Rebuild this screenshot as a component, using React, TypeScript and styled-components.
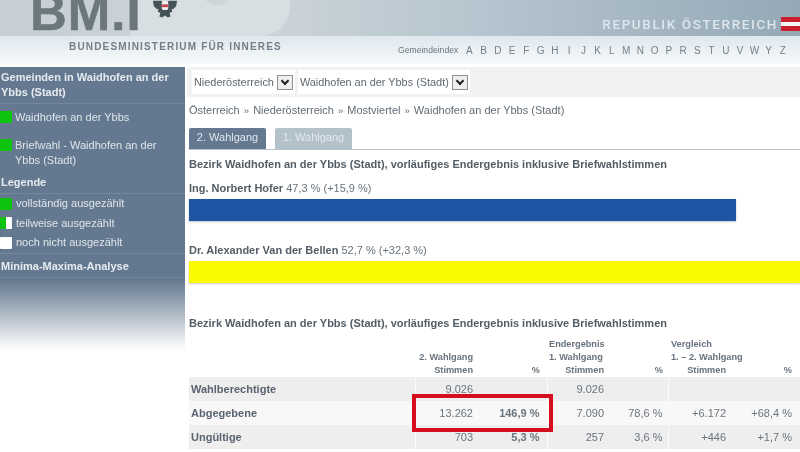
import styled, { createGlobalStyle } from "styled-components";

const GlobalStyle = createGlobalStyle`
  html, body {
    margin: 0;
    padding: 0;
    background: #fff;
    overflow: hidden;
  }
  body {
    font-family: "Liberation Sans", Arial, sans-serif;
  }
`;

const letters = "A B D E F G H I J K L M N O P R S T U V W Y Z".split(" ");

const sideGroups = [
  { color: "green", text: "Waidhofen an der Ybbs" },
  { color: "green", text: "Briefwahl - Waidhofen an der Ybbs (Stadt)" },
];

const legend = [
  { color: "green", text: "vollständig ausgezählt" },
  { color: "half", text: "teilweise ausgezählt" },
  { color: "white", text: "noch nicht ausgezählt" },
];

const rows = [
  { label: "Wahlberechtigte", cells: ["9.026", "", "9.026", "", "", ""] },
  { label: "Abgegebene", cells: ["13.262", "146,9 %", "7.090", "78,6 %", "+6.172", "+68,4 %"] },
  { label: "Ungültige", cells: ["703", "5,3 %", "257", "3,6 %", "+446", "+1,7 %"] },
];

const Eagle = () => (
  <svg width="26" height="19" viewBox="0 0 28 19">
    <path d="M1 0h9l2 3h4l2-3h9l-1 6-3 3-2 0 1 3-3 1 1 4-3 1-3-2-3 2-3-1 1-4-3-1 1-3-2 0-3-3z" fill="#465356" />
    <rect x="10.5" y="1" width="7" height="9" rx="2" fill="#f4f4f4" />
    <rect x="10.5" y="4" width="7" height="3" fill="#c8454f" />
  </svg>
);

const App = () => {
  return (
    <Page>
      <GlobalStyle />
      <TopBand>
        <Swirl />
        <Logo>
          BM.I
          <Eagle />
        </Logo>
        <Republic>
          REPUBLIK ÖSTERREICH
          <Flag />
        </Republic>
      </TopBand>
      <SubBand>
        <Ministry>BUNDESMINISTERIUM FÜR INNERES</Ministry>
        <IndexBar>
          <IndexLabel>Gemeindeindex</IndexLabel>
          {letters.map((l) => (
            <IndexLetter key={l}>{l}</IndexLetter>
          ))}
        </IndexBar>
      </SubBand>
      <Body>
        <Sidebar>
          <SideSolid>
            <SideTitle>Gemeinden in Waidhofen an der Ybbs (Stadt)</SideTitle>
            {sideGroups.map((g) => (
              <SideItem key={g.text}>
                <Swatch $kind={g.color} />
                <span>{g.text}</span>
              </SideItem>
            ))}
            <SideTitle>Legende</SideTitle>
            {legend.map((g) => (
              <LegendItem key={g.text}>
                <Swatch $kind={g.color} />
                <span>{g.text}</span>
              </LegendItem>
            ))}
            <SideTitle>Minima-Maxima-Analyse</SideTitle>
          </SideSolid>
          <SideFade />
        </Sidebar>
        <Main>
          <SelectBar>
            <FakeSelect>
              Niederösterreich
              <SelectArrow />
            </FakeSelect>
            <FakeSelect>
              Waidhofen an der Ybbs (Stadt)
              <SelectArrow />
            </FakeSelect>
          </SelectBar>
          <Crumbs>
            Österreich <Sep>»</Sep> Niederösterreich <Sep>»</Sep> Mostviertel <Sep>»</Sep> Waidhofen an der Ybbs (Stadt)
          </Crumbs>
          <Tabs>
            <Tab $active>2. Wahlgang</Tab>
            <Tab>1. Wahlgang</Tab>
          </Tabs>
          <Heading>Bezirk Waidhofen an der Ybbs (Stadt), vorläufiges Endergebnis inklusive Briefwahlstimmen</Heading>
          <Candidate>
            <b>Ing. Norbert Hofer</b> 47,3 % (+15,9 %)
          </Candidate>
          <Bar $color="#1f55a3" $width={547} />
          <Candidate $second>
            <b>Dr. Alexander Van der Bellen</b> 52,7 % (+32,3 %)
          </Candidate>
          <Bar $color="#fbfb00" $width={611} />
          <TableHeading>
            Bezirk Waidhofen an der Ybbs (Stadt), vorläufiges Endergebnis inklusive Briefwahlstimmen
          </TableHeading>
          <TableWrap>
            <ResultTable>
              <colgroup>
                <col style={{ width: 226 }} />
                <col style={{ width: 58 }} />
                <col style={{ width: 74 }} />
                <col style={{ width: 57 }} />
                <col style={{ width: 64 }} />
                <col style={{ width: 58 }} />
                <col style={{ width: 74 }} />
              </colgroup>
              <thead>
                <tr>
                  <Head />
                  <Head>
                    <HeadLine>2. Wahlgang</HeadLine>
                    Stimmen
                  </Head>
                  <Head>%</Head>
                  <Head>
                    <HeadLine $left>Endergebnis</HeadLine>
                    <HeadLine $left>1. Wahlgang</HeadLine>
                    Stimmen
                  </Head>
                  <Head>%</Head>
                  <Head>
                    <HeadLine $left>Vergleich</HeadLine>
                    <HeadLine $left>1. – 2. Wahlgang</HeadLine>
                    Stimmen
                  </Head>
                  <Head>%</Head>
                </tr>
              </thead>
              <tbody>
                {rows.map((r, i) => (
                  <BodyRow key={r.label} $odd={i % 2 === 0}>
                    <RowLabel>{r.label}</RowLabel>
                    {r.cells.map((c, j) => (
                      <Cell key={j} $strong={j === 1}>
                        {c}
                      </Cell>
                    ))}
                  </BodyRow>
                ))}
              </tbody>
            </ResultTable>
            <Highlight />
          </TableWrap>
        </Main>
      </Body>
    </Page>
  );
};

export default App;

const Page = styled.div`
  width: 800px;
  height: 452px;
  overflow: hidden;
  background: #fff;
  color: #5c6670;
  filter: blur(0.5px);
`;

const TopBand = styled.div`
  position: relative;
  height: 36px;
  overflow: hidden;
  display: flex;
  align-items: flex-end;
  justify-content: space-between;
  background: linear-gradient(90deg, #c6d0d5 0%, #cad3d8 35%, #b4c4ce 62%, #94a8b6 100%);
`;

const Logo = styled.div`
  display: flex;
  align-items: flex-start;
  gap: 10px;
  height: 32px;
  margin-left: 30px;
  margin-bottom: 7px;
  font-size: 51px;
  line-height: 32px;
  font-weight: 700;
  letter-spacing: 1px;
  color: #6c767d;
  position: relative;
  -webkit-text-stroke: 0.5px #6c767d;

  svg {
    margin-top: 3px;
    flex: none;
  }
`;

const Swirl = styled.div`
  position: absolute;
  left: 130px;
  top: -40px;
  width: 160px;
  height: 76px;
  border-radius: 0 0 30px 0;
  background: #d8dfe3;

  &::after {
    content: "";
    position: absolute;
    left: 75px;
    top: 36px;
    width: 24px;
    height: 9px;
    border-radius: 0 0 12px 12px;
    background: #ccd7da;
  }
`;

const Republic = styled.div`
  display: flex;
  align-items: center;
  gap: 3px;
  margin-bottom: 4px;
  font-family: Roboto, "Liberation Sans", sans-serif;
  font-size: 13.5px;
  font-weight: 500;
  letter-spacing: 1.6px;
  color: #dde6ea;
  position: relative;
`;

const Flag = styled.div`
  width: 19px;
  height: 14px;
  background: linear-gradient(#c8202f 0 33%, #f4f4f4 33% 66%, #c8202f 66%);
`;

const SubBand = styled.div`
  height: 28px;
  display: flex;
  align-items: center;
  justify-content: space-between;
  background: linear-gradient(#dfe8ee, #f7f9fa);
  padding: 0 10px 8px 69px;
  box-sizing: border-box;
`;

const Ministry = styled.div`
  font-size: 10px;
  font-weight: 700;
  letter-spacing: 1.17px;
  color: #737f8a;
`;

const IndexBar = styled.div`
  display: flex;
  align-items: center;
  margin-top: 8px;
  font-size: 8.6px;
  color: #69737c;
`;

const IndexLabel = styled.span`
  margin-right: 4px;
`;

const IndexLetter = styled.span`
  width: 14.25px;
  text-align: center;
  font-size: 10px;
  color: #76808a;
`;

const Body = styled.div`
  display: flex;
  margin-top: 3px;
  align-items: flex-start;
`;

const Sidebar = styled.aside`
  width: 185px;
  flex: none;
  color: #e8edf2;
  font-size: 11px;
  line-height: 15px;
`;

const SideSolid = styled.div`
  background: #64798f;
  height: 213px;
`;

const SideFade = styled.div`
  height: 70px;
  background: linear-gradient(#64798f, #fff);
`;

const SideTitle = styled.div`
  padding: 3px 2px 3px 1px;
  font-weight: 700;
  border-bottom: 1px solid #74889d;
  color: #e6ebf0;
`;

const SideItem = styled.div`
  display: flex;
  padding: 6px 24px 7px 0;
  gap: 3px;
  align-items: flex-start;
  color: #dfe5eb;

  > div {
    margin-top: 1px;
  }

  & + ${SideTitle} {
    padding-top: 0;
  }
`;

const LegendItem = styled.div`
  display: flex;
  align-items: center;
  gap: 4px;
  height: 19.5px;
  color: #dfe5eb;

  & + ${SideTitle} {
    padding-top: 5px;
    border-top: 1px solid #74889d;
  }
`;

const Swatch = styled.div<{ $kind: string }>`
  width: 12px;
  height: 12px;
  flex: none;
  border-radius: 1px;
  background: ${(p) =>
    p.$kind === "green"
      ? "#0ec40e"
      : p.$kind === "half"
        ? "linear-gradient(90deg, #0ec40e 50%, #fff 50%)"
        : "#fff"};
`;

const Main = styled.main`
  flex: 1;
  min-width: 0;
  padding-left: 4px;
`;

const SelectBar = styled.div`
  display: flex;
  align-items: center;
  gap: 3px;
  height: 30px;
  margin-left: -2px;
  padding-left: 5px;
  background: #f0f2f4;
  box-sizing: border-box;
`;

const FakeSelect = styled.div`
  display: flex;
  align-items: center;
  gap: 3px;
  height: 24px;
  padding: 0 2px;
  background: #fff;
  font-size: 10.9px;
  color: #5f6870;
`;

const SelectArrow = styled.div`
  position: relative;
  width: 16px;
  height: 15px;
  border: 1px solid #8d9194;
  background: #eee;
  box-sizing: border-box;

  &::after {
    content: "";
    position: absolute;
    left: 4px;
    top: 2px;
    width: 4px;
    height: 4px;
    border-right: 2px solid #222;
    border-bottom: 2px solid #222;
    transform: rotate(45deg);
  }
`;

const Crumbs = styled.div`
  margin-top: 6px;
  height: 14px;
  font-size: 11px;
  line-height: 14px;
  color: #626c75;
  white-space: nowrap;
`;

const Sep = styled.span`
  font-size: 9.5px;
  margin: 0 1px;
`;

const Tabs = styled.div`
  display: flex;
  gap: 9px;
  margin-top: 11px;
  height: 21px;
  border-bottom: 1px solid #b6c2cc;
`;

const Tab = styled.div<{ $active?: boolean }>`
  width: 77px;
  text-align: center;
  font-size: 11px;
  line-height: 19px;
  color: ${(p) => (p.$active ? "#dfe6ec" : "#e3e9ed")};
  background: ${(p) => (p.$active ? "#64798f" : "#b3c1cb")};
  border-radius: 2px 2px 0 0;
`;

const Heading = styled.div`
  margin-top: 7px;
  font-size: 11px;
  line-height: 14px;
  font-weight: 700;
  color: #535d66;
  white-space: nowrap;
`;

const Candidate = styled.div<{ $second?: boolean }>`
  margin-top: ${(p) => (p.$second ? "22px" : "10px")};
  font-size: 11px;
  line-height: 14px;
  color: #6a747d;
  white-space: nowrap;

  b {
    color: #535d66;
  }
`;

const Bar = styled.div<{ $color: string; $width: number }>`
  height: 22px;
  margin-top: 4px;
  width: ${(p) => p.$width}px;
  background: ${(p) => p.$color};
  box-shadow: 0 1px 2px rgba(90, 90, 90, 0.35);
`;

const TableHeading = styled(Heading)`
  margin-top: 33px;
`;

const TableWrap = styled.div`
  position: relative;
  margin-top: 8px;
`;

const ResultTable = styled.table`
  width: 611px;
  table-layout: fixed;
  border-collapse: collapse;
  font-size: 11px;

  th:nth-child(3),
  td:nth-child(3) {
    padding-right: 7px;
  }
  th:nth-child(5),
  td:nth-child(5) {
    padding-right: 5px;
  }
  th:nth-child(7),
  td:nth-child(7) {
    padding-right: 8px;
  }
  th:nth-child(4) {
    padding-left: 2px;
  }
  th:nth-child(6) {
    padding-left: 3px;
  }
`;

const Head = styled.th`
  height: 39px;
  padding: 0;
  vertical-align: bottom;
  text-align: right;
  font-size: 9.2px;
  line-height: 13px;
  font-weight: 700;
  color: #68727c;
  white-space: nowrap;
`;

const HeadLine = styled.div<{ $left?: boolean }>`
  white-space: nowrap;
  text-align: ${(p) => (p.$left ? "left" : "right")};
`;

const BodyRow = styled.tr<{ $odd: boolean }>`
  background: ${(p) => (p.$odd ? "#eeeeee" : "#f8f8f8")};
`;

const RowLabel = styled.td`
  height: 24px;
  padding: 0 0 0 2px;
  font-weight: 700;
  font-size: 11px;
  color: #596470;
`;

const Cell = styled.td<{ $strong: boolean }>`
  height: 24px;
  padding: 0;
  text-align: right;
  color: #6a747d;
  font-weight: ${(p) => (p.$strong ? 700 : 400)};
  white-space: nowrap;

  &:nth-child(2),
  &:nth-child(4),
  &:nth-child(6) {
    border-left: 1px solid #fafafa;
  }
`;

const Highlight = styled.div`
  position: absolute;
  left: 223px;
  top: 56px;
  width: 133px;
  height: 30px;
  border: 4px solid #d50f1e;
  pointer-events: none;
`;
